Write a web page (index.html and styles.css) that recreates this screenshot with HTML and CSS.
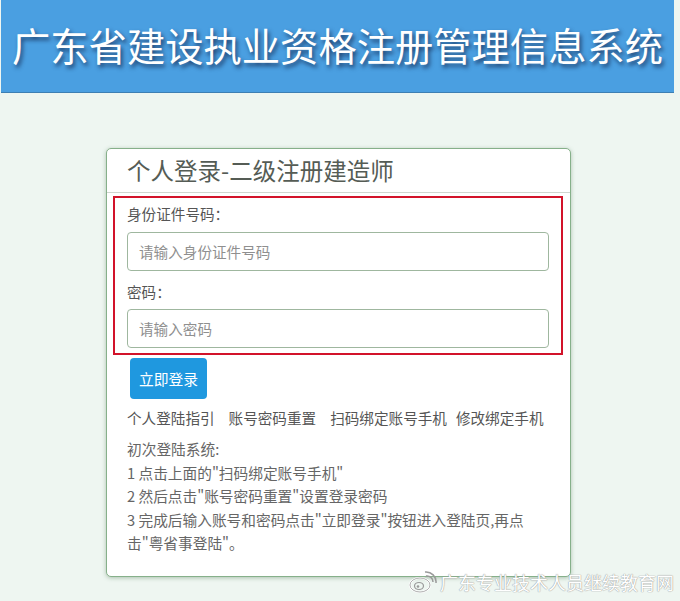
FILE: index.html
```html
<!DOCTYPE html>
<html lang="zh-CN">
<head>
<meta charset="utf-8">
<title>广东省建设执业资格注册管理信息系统</title>
<link rel="stylesheet" href="styles.css">
</head>
<body>
<header class="banner">
  <h1 class="banner-title">广东省建设执业资格注册管理信息系统</h1>
</header>
<main class="card">
  <div class="card-head">个人登录-二级注册建造师</div>
  <div class="card-body">
    <div class="form-box">
      <label class="field-label">身份证件号码：</label>
      <input class="field-input" type="text" placeholder="请输入身份证件号码">
      <label class="field-label second">密码：</label>
      <input class="field-input" type="password" placeholder="请输入密码">
    </div>
    <button class="login-btn" type="button">立即登录</button>
    <div class="links">
      <a class="link l1">个人登陆指引</a><a class="link l2">账号密码重置</a><a class="link l3">扫码绑定账号手机</a><a class="link">修改绑定手机</a>
    </div>
    <div class="notes">
      <p>初次登陆系统:</p>
      <p>1 点击上面的"扫码绑定账号手机"</p>
      <p>2 然后点击"账号密码重置"设置登录密码</p>
      <p>3 完成后输入账号和密码点击"立即登录"按钮进入登陆页,再点<br>击"粤省事登陆"。</p>
    </div>
  </div>
</main>
<div class="watermark">
  <svg class="wb-logo" width="28" height="24" viewBox="0 0 28 24">
    <ellipse cx="11" cy="15" rx="10" ry="7" fill="none" stroke="#fff" stroke-width="2.2"/>
    <ellipse cx="11" cy="15" rx="10" ry="7" fill="none" stroke="#9a9a9a" stroke-width="0.8"/>
    <ellipse cx="10" cy="16" rx="4.5" ry="3.5" fill="none" stroke="#9a9a9a" stroke-width="1.2"/>
    <circle cx="9" cy="16.5" r="1.3" fill="#9a9a9a"/>
    <path d="M17 6 A6 6 0 0 1 24 12" fill="none" stroke="#9a9a9a" stroke-width="1.5"/>
    <path d="M16 2 A10 10 0 0 1 27 13" fill="none" stroke="#9a9a9a" stroke-width="1.5"/>
  </svg>
  <span class="wm-text">广东专业技术人员继续教育网</span>
</div>
</body>
</html>
```
FILE: styles.css
```css
html, body {
  margin: 0;
  padding: 0;
}
body {
  background: #eef6f1;
  font-family: "Noto Sans CJK SC", "Noto Sans", sans-serif;
  width: 680px;
  height: 601px;
  overflow: hidden;
  position: relative;
}
.banner {
  margin: 0 6px 0 1px;
  height: 92px;
  background: #4a9fe1;
  border-bottom: 1px solid #3d7fb3;
  display: flex;
  align-items: center;
}
.banner-title {
  margin: -2px 0 0 11px;
  font-size: 38.3px;
  font-weight: 400;
  color: #fff;
  letter-spacing: 0;
  line-height: 1;
  white-space: nowrap;
  text-shadow: 2px 3px 4px rgba(20, 40, 80, 0.8);
}
.card {
  display: block;
  margin: 55px 0 0 106px;
  width: 463px;
  height: 427px;
  background: #fff;
  border: 1px solid #86b08a;
  border-radius: 5px;
  box-shadow: 0 1px 4px rgba(90, 130, 95, 0.45);
}
.card-head {
  height: 43px;
  border-bottom: 1px solid #cfd6d0;
  padding-left: 20px;
  font-size: 23.5px;
  line-height: 42px;
  color: #555c55;
}
.card-body {
  padding: 3px 0 0 6px;
}
.form-box {
  width: 422px;
  border: 2px solid #d2132a;
  padding: 6px 12px 5px 12px;
}
.field-label {
  display: block;
  font-size: 14.6px;
  line-height: 20px;
  color: #555;
  margin-bottom: 8px;
}
.field-label.second {
  margin-top: 11px;
  margin-bottom: 7px;
}
.field-input {
  display: block;
  box-sizing: border-box;
  width: 422px;
  height: 39px;
  border: 1px solid #9fb79f;
  border-radius: 4px;
  padding: 0 11px;
  font-family: inherit;
  font-size: 14.6px;
  color: #555;
  background: #fff;
  outline: none;
}
.field-input::placeholder {
  color: #8f8f8f;
}
.login-btn {
  display: block;
  margin: 3px 0 0 17px;
  width: 77px;
  height: 41px;
  border: 0;
  border-radius: 4px;
  background: #1f98df;
  color: #fff;
  font-family: inherit;
  font-size: 14.8px;
  padding: 0;
}
.links {
  margin: 8px 0 0 14px;
  font-size: 14.6px;
  line-height: 22px;
  color: #555;
  white-space: nowrap;
}
.link {
  color: #555;
  text-decoration: none;
}
.l1, .l2 {
  margin-right: 14px;
}
.l3 {
  margin-right: 9px;
}
.notes {
  margin: 8px 0 0 14px;
  font-size: 14.7px;
  line-height: 23.5px;
  color: #666;
}
.notes p {
  margin: 0;
}
.watermark {
  position: absolute;
  left: 409px;
  top: 569px;
  display: flex;
  align-items: center;
  gap: 3px;
}
.wm-text {
  font-size: 18px;
  color: #fff;
  text-shadow: 0 0 1px #999, 0 0 1px #999;
  letter-spacing: 0;
}
```
